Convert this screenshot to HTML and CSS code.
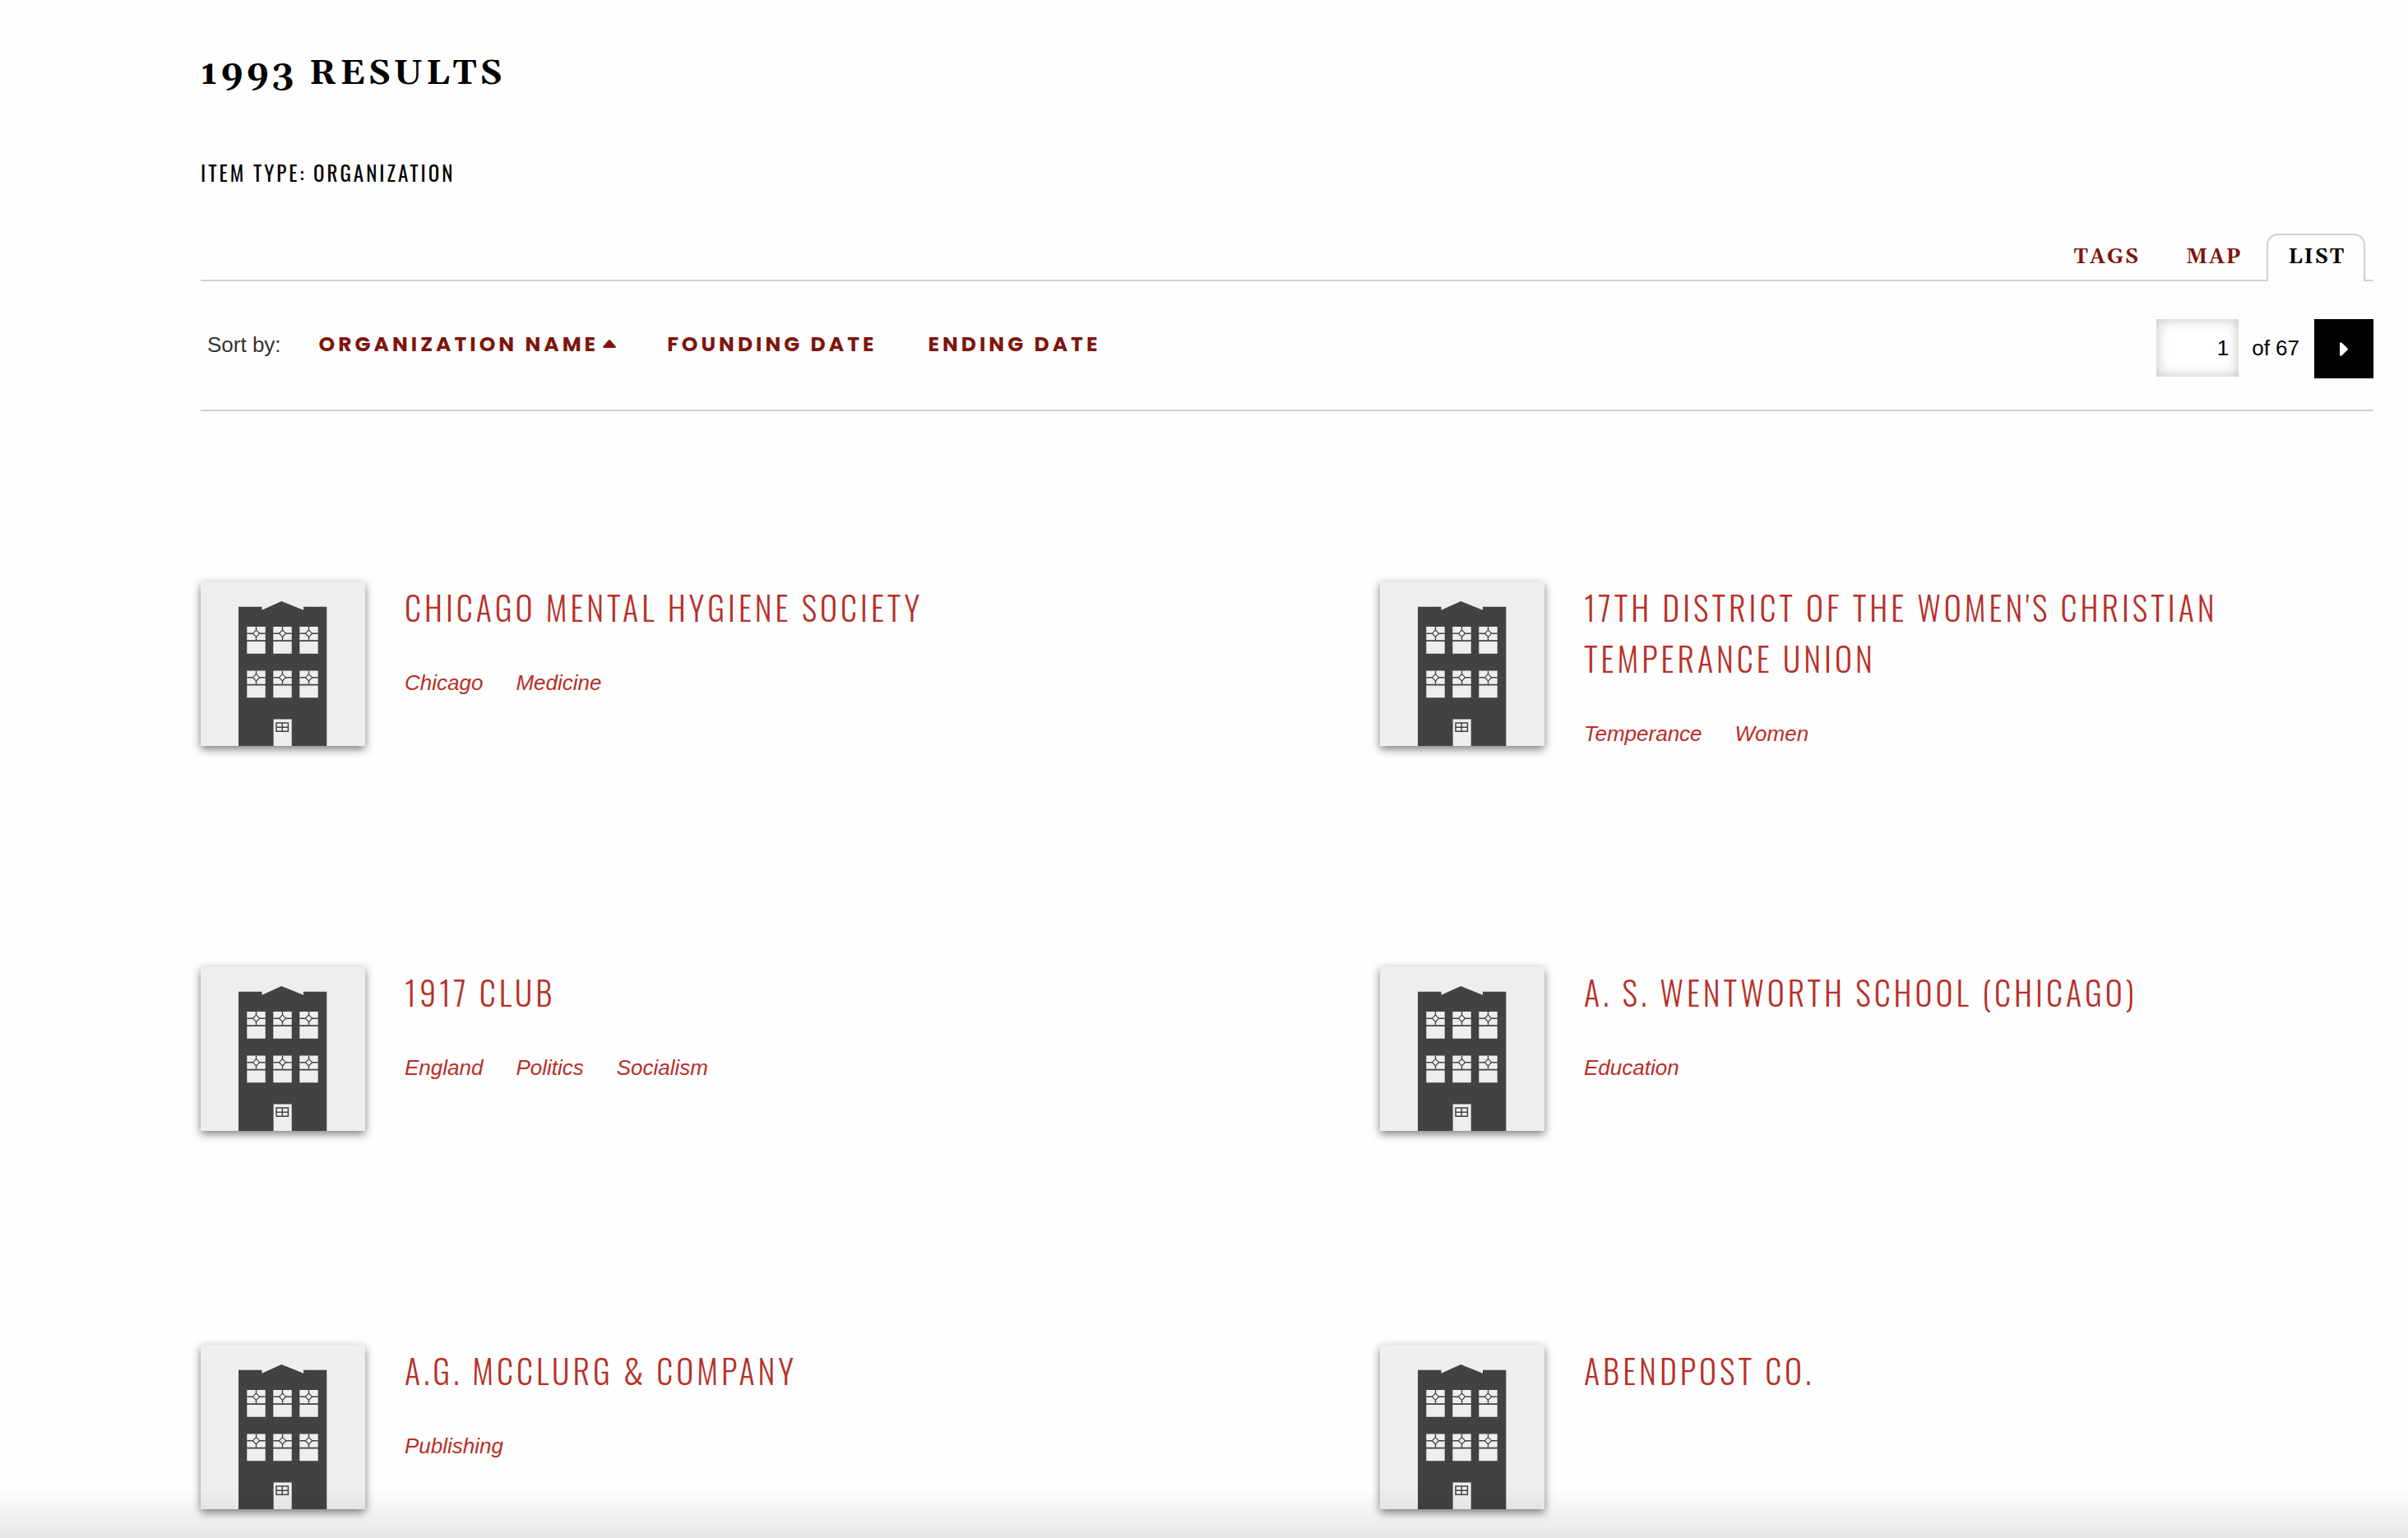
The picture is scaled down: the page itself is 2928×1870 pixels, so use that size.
FILE: index.html
```html
<!DOCTYPE html>
<html lang="en">
<head>
<meta charset="utf-8">
<meta name="viewport" content="width=device-width, initial-scale=1">
<title>1993 Results</title>
<link rel="stylesheet" href="styles.css">
</head>
<body>
<svg class="sprite" aria-hidden="true">
  <defs>
    <g id="pane">
      <path fill="#eee" d="M0 0h22.4v16.3H0zM0 18h22.4v14.8H0z"/>
      <path stroke="#424242" stroke-width="1.4" d="M11.2 0v16.3M0 8.2h22.4"/>
      <path fill="#eee" stroke="#424242" stroke-width="1.2" d="M11.2 4.1l4.1 4.1-4.1 4.1-4.1-4.1z"/>
    </g>
    <symbol id="building" viewBox="0 0 200 200">
      <path fill="#424242" d="M46 200V30.7h28.5v4L98.3 24l26.7 10.7v-4h28.3V200z"/>
      <use href="#pane" x="56.3" y="55"/><use href="#pane" x="88.3" y="55"/><use href="#pane" x="120.3" y="55"/>
      <use href="#pane" x="56.3" y="108.5"/><use href="#pane" x="88.3" y="108.5"/><use href="#pane" x="120.3" y="108.5"/>
      <path fill="#eee" d="M88.6 167.5h22.1V200H88.6z"/>
      <path fill="none" stroke="#424242" stroke-width="1.5" d="M92 172h14.4v10.3H92zM99.2 172v10.3M92 177.2h14.4"/>
    </symbol>
  </defs>
</svg>
<main class="page">
  <h1 class="page-title">1993 Results</h1>
  <p class="filter">Item Type: Organization</p>

  <nav class="tabs" aria-label="View">
    <a class="tab" href="#tags">Tags</a>
    <a class="tab" href="#map">Map</a>
    <a class="tab tab-active" href="#list" aria-current="page">List</a>
  </nav>

  <div class="toolbar">
    <div class="sort">
      <span class="sort-label">Sort by:</span>
      <a class="sort-link" href="#name">Organization Name<svg class="caret" viewBox="0 0 16 10" aria-hidden="true"><path fill="currentColor" d="M7 .6Q8-.5 9 .6l6.500 7.400Q16.400 9.600 15 10H1Q-.4 9.600.5 8z"/></svg></a>
      <a class="sort-link" href="#founding">Founding Date</a>
      <a class="sort-link" href="#ending">Ending Date</a>
    </div>
    <form class="pager">
      <input class="pager-input" id="page" type="text" value="1">
      <label class="pager-label" for="page">of 67</label>
      <button class="pager-next" type="button" aria-label="Next page"><svg class="next-icon" viewBox="0 0 10 17" aria-hidden="true"><path fill="currentColor" d="M0 1.500Q.6-.3 2.200.6l7.300 7Q10.300 8.500 9.500 9.400l-7.300 7Q.6 17.300 0 15.500z"/></svg></button>
    </form>
  </div>

  <div class="results">
    <article class="item">
      <svg class="thumb" aria-hidden="true"><use href="#building"/></svg>
      <div class="item-body">
        <h2 class="item-title"><a href="#i1">Chicago Mental Hygiene Society</a></h2>
        <div class="tags"><a href="#chicago">Chicago</a><a href="#medicine">Medicine</a></div>
      </div>
    </article>
    <article class="item">
      <svg class="thumb" aria-hidden="true"><use href="#building"/></svg>
      <div class="item-body">
        <h2 class="item-title"><a href="#i2">17th District of the Women's Christian Temperance Union</a></h2>
        <div class="tags"><a href="#temperance">Temperance</a><a href="#women">Women</a></div>
      </div>
    </article>
    <article class="item">
      <svg class="thumb" aria-hidden="true"><use href="#building"/></svg>
      <div class="item-body">
        <h2 class="item-title"><a href="#i3">1917 Club</a></h2>
        <div class="tags"><a href="#england">England</a><a href="#politics">Politics</a><a href="#socialism">Socialism</a></div>
      </div>
    </article>
    <article class="item">
      <svg class="thumb" aria-hidden="true"><use href="#building"/></svg>
      <div class="item-body">
        <h2 class="item-title"><a href="#i4">A. S. Wentworth School (Chicago)</a></h2>
        <div class="tags"><a href="#education">Education</a></div>
      </div>
    </article>
    <article class="item">
      <svg class="thumb" aria-hidden="true"><use href="#building"/></svg>
      <div class="item-body">
        <h2 class="item-title"><a href="#i5">A.G. McClurg &amp; Company</a></h2>
        <div class="tags"><a href="#publishing">Publishing</a></div>
      </div>
    </article>
    <article class="item">
      <svg class="thumb" aria-hidden="true"><use href="#building"/></svg>
      <div class="item-body">
        <h2 class="item-title"><a href="#i6">Abendpost Co.</a></h2>
      </div>
    </article>
  </div>
</main>
<div class="bottom-fade"></div>
</body>
</html>
```
FILE: styles.css
```css
* { box-sizing: border-box; }

body {
  margin: 0;
  background: #fefefe;
  color: #000;
  font: 26px/46px "Liberation Sans", Arial, sans-serif;
}

a { color: inherit; text-decoration: none; }

.sprite { position: absolute; width: 0; height: 0; }

.page { padding: 58px 42px 34px 244px; }

.page-title {
  margin: 0;
  font: bold 42px/64px Gelasio, Georgia, serif;
  letter-spacing: 4px;
  text-transform: uppercase;
}

.filter {
  margin: 68px 0 54px;
  font: 400 25px/40px Oswald, "Open Sans Condensed", sans-serif;
  letter-spacing: 3px;
  text-transform: uppercase;
}

.tabs {
  display: flex;
  justify-content: flex-end;
  gap: 6px;
  padding-right: 10px;
  border-bottom: 2px solid #d4cfcb;
}

.tab {
  margin-bottom: -2px;
  padding: 0 22px 2px 24px;
  border: 2px solid transparent;
  border-bottom: 0;
  border-radius: 14px 14px 0 0;
  color: #7e150d;
  font: bold 25px/54px Gelasio, Georgia, serif;
  letter-spacing: 2px;
  text-transform: uppercase;
}

.tab-active {
  border-color: #d4cfcb;
  background: #fefefe;
  color: #000;
}

.toolbar {
  display: flex;
  justify-content: space-between;
  align-items: flex-start;
  padding: 46px 0 38px;
  border-bottom: 2px solid #d4cfcb;
}

.sort {
  display: flex;
  align-items: center;
  padding: 8px;
}

.sort-label { margin-right: 46px; color: #333; }

.sort-link {
  margin-right: 62px;
  color: #7e150d;
  font: 700 25px/46px Poppins, Lato, sans-serif;
  letter-spacing: 4px;
  text-transform: uppercase;
}

.caret { width: 16px; height: 10px; margin: 0 0 4px 5px; }

.pager { display: flex; align-items: flex-start; }

.pager-input {
  width: 100px;
  height: 70px;
  padding: 0 12px;
  border: 0;
  background: #fff;
  box-shadow: inset 0 0 16px rgba(0, 0, 0, .25);
  color: #000;
  font: inherit;
  text-align: right;
}

.pager-label { margin: 0 18px 0 16px; line-height: 70px; }

.pager-next {
  display: grid;
  place-items: center;
  width: 72px;
  height: 72px;
  padding: 0;
  border: 0;
  background: #000;
  color: #fff;
}

.next-icon { width: 10px; height: 17px; }

.results {
  display: grid;
  grid-template-columns: 1fr 1fr;
  gap: 260px 226px;
  padding-top: 207px;
}

.item {
  display: flex;
  align-items: flex-start;
  gap: 48px;
}

.thumb {
  flex: none;
  width: 200px;
  height: 200px;
  background: #eee;
  box-shadow: 0 4px 10px rgba(0, 0, 0, .5);
}

.item-body { flex: 1; color: #b82f28; }

.item-title {
  margin: 0 0 38px;
  font: 300 40px/62px Oswald, "Open Sans Condensed", sans-serif;
  letter-spacing: 4px;
  text-transform: uppercase;
}

.tags {
  display: flex;
  gap: 40px;
  font-style: italic;
}

.bottom-fade {
  position: fixed;
  right: 0;
  bottom: 0;
  left: 0;
  height: 60px;
  background: linear-gradient(rgba(0, 0, 0, 0), rgba(0, 0, 0, .09));
  pointer-events: none;
}
```
